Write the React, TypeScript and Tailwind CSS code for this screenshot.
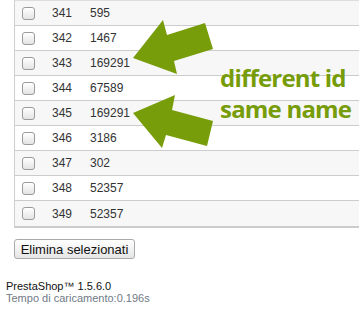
const rows: [number, number][] = [
  [341, 595],
  [342, 1467],
  [343, 169291],
  [344, 67589],
  [345, 169291],
  [346, 3186],
  [347, 302],
  [348, 52357],
  [349, 52357],
]

function Checkbox() {
  return (
    <span className="block size-[13px] rounded-[3px] border border-[#9a9a9a] bg-gradient-to-b from-white to-[#e4e4e4] shadow-[inset_0_1px_0_#fff]" />
  )
}

function Arrows() {
  return (
    <svg className="absolute left-0 top-0" width="359" height="160" viewBox="0 0 359 160">
      <polygon
        fill="#789d0b"
        points="133,58 163,20 167,35 205,23 213,49 174,61 177,74"
      />
      <polygon
        fill="#789d0b"
        points="133,113 175,95 172,110 213,121 207,146 166,135 162,148"
      />
    </svg>
  )
}

export default function App() {
  return (
    <div className="relative h-[319px] w-[359px] overflow-hidden bg-white font-['Liberation_Sans',Arial,sans-serif] text-[12px] text-[#333]">
      {/* Results table */}
      <div className="ml-[14px] border-l border-t border-l-[#cfcfcf] border-t-[#dddddd] border-b-2 border-b-[#cccccc]">
        {rows.map(([id, name], i) => (
          <div
            key={id}
            className={`flex h-[25px] items-center ${i === 0 ? "h-[24px]" : ""} ${i < rows.length - 1 ? "border-b border-[#cccccc]" : ""} ${i % 2 === 0 ? "bg-[#f7f7f7]" : "bg-white"}`}
          >
            <div className="w-[37px] pl-[7px]">
              <Checkbox />
            </div>
            <div className="w-[38px]">{id}</div>
            <div>{name}</div>
          </div>
        ))}
      </div>

      <Arrows />

      <div className="absolute left-[220px] top-[62px] font-['Open_Sans',sans-serif] text-[24px] font-bold leading-[31px] tracking-[-0.8px] text-[#779c0a]">
        <div>different id</div>
        <div>same name</div>
      </div>

      {/* Actions */}
      <div className="ml-[14px] mt-[11px]">
        <button className="h-[20px] w-[121px] rounded-[3px] border border-[#a9a9a9] bg-gradient-to-b from-white to-[#e6e6e6] text-[13px] leading-none text-[#111]">
          Elimina selezionati
        </button>
      </div>

      {/* Footer */}
      <div className="ml-[6px] mt-[21px] text-[11px] leading-[12px]">
        <div className="text-[#111]">PrestaShop™ 1.5.6.0</div>
        <div className="text-[#6f7a86]">Tempo di caricamento:0.196s</div>
      </div>
    </div>
  )
}
